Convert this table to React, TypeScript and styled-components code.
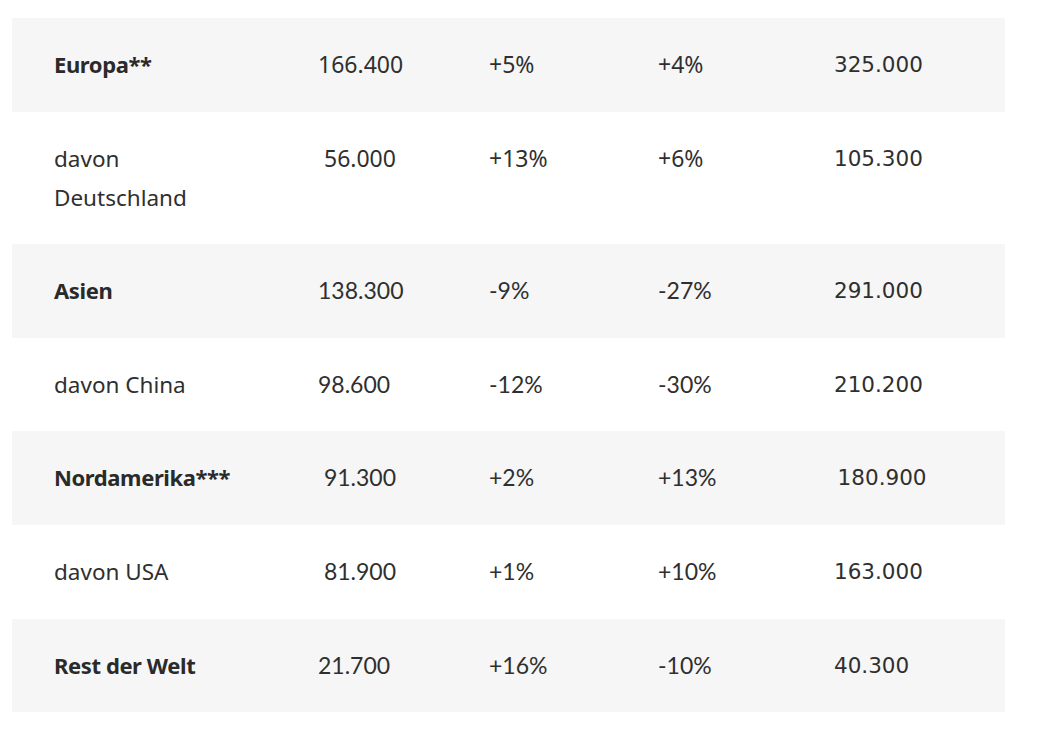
import React from "react";
import styled, { createGlobalStyle } from "styled-components";

const Global = createGlobalStyle`
  html, body { margin: 0; padding: 0; background: #ffffff; }
  body { font-family: "Noto Sans", sans-serif; color: #2f2f2f; }
`;

const Page = styled.div`
  padding: 18px 32px 18px 12px;
`;

const Table = styled.table`
  width: 993px;
  border-collapse: collapse;
  table-layout: fixed;
`;

const Col = styled.col<{ $w: number }>`
  width: ${(p) => p.$w}px;
`;

const Row = styled.tr<{ $shaded: boolean }>`
  background: ${(p) => (p.$shaded ? "#f6f6f6" : "#ffffff")};
`;

type FontKind = "plex" | "lato" | "dejavu";

const fontFamilies: Record<FontKind, string> = {
  plex: `"Noto Sans", sans-serif`,
  lato: `Lato, sans-serif`,
  dejavu: `"DejaVu Sans", sans-serif`,
};
const fontSizes: Record<FontKind, string> = {
  plex: "23px",
  lato: "23px",
  dejavu: "21.5px",
};

const Cell = styled.td<{ $font: FontKind }>`
  padding: 27px 42px 27.6px 42px;
  vertical-align: top;
  font-family: ${(p) => fontFamilies[p.$font]};
  font-size: ${(p) => fontSizes[p.$font]};
  font-weight: 400;
  line-height: 39px;
  color: #2f2f2f;
  white-space: pre-wrap;
`;

const Label = styled(Cell)<{ $bold: boolean }>`
  font-size: ${(p) => (p.$bold ? "22px" : "22.5px")};
  font-weight: ${(p) => (p.$bold ? 700 : 400)};
  letter-spacing: ${(p) => (p.$bold ? "-0.4px" : "0")};
  color: ${(p) => (p.$bold ? "#2a2a2a" : "#2f2f2f")};
`;

type C = [string, FontKind];
type RowData = { label: string; bold: boolean; cells: C[] };

const columns = [264, 171, 169, 176, 213];

const rows: RowData[] = [
  { label: "Europa**", bold: true, cells: [["166.400", "plex"], ["+5%", "plex"], ["+4%", "plex"], ["325.000", "dejavu"]] },
  { label: "davon Deutschland", bold: false, cells: [["\u00a056.000", "plex"], ["+13%", "plex"], ["+6%", "plex"], ["105.300", "dejavu"]] },
  { label: "Asien", bold: true, cells: [["138.300", "lato"], ["-9%", "lato"], ["-27%", "lato"], ["291.000", "dejavu"]] },
  { label: "davon China", bold: false, cells: [["98.600", "lato"], ["-12%", "lato"], ["-30%", "lato"], ["210.200", "dejavu"]] },
  { label: "Nordamerika***", bold: true, cells: [["\u00a091.300", "lato"], ["+2%", "lato"], ["+13%", "lato"], ["\u2006180.900", "dejavu"]] },
  { label: "davon USA", bold: false, cells: [["\u00a081.900", "lato"], ["+1%", "lato"], ["+10%", "lato"], ["163.000", "dejavu"]] },
  { label: "Rest der Welt", bold: true, cells: [["21.700", "lato"], ["+16%", "lato"], ["-10%", "lato"], ["40.300", "dejavu"]] },
];

export default function App() {
  return (
    <>
      <Global />
      <Page>
        <Table>
          <colgroup>
            {columns.map((w, i) => (
              <Col key={i} $w={w} />
            ))}
          </colgroup>
          <tbody>
            {rows.map((r, i) => (
              <Row key={r.label} $shaded={i % 2 === 0}>
                <Label $font="plex" $bold={r.bold}>{r.label}</Label>
                {r.cells.map(([v, f], j) => (
                  <Cell key={j} $font={f}>{v}</Cell>
                ))}
              </Row>
            ))}
          </tbody>
        </Table>
      </Page>
    </>
  );
}
